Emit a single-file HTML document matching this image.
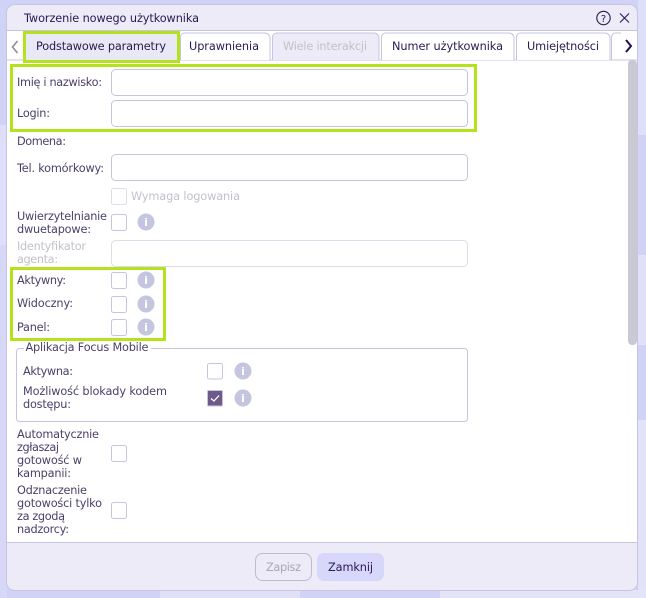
<!DOCTYPE html>
<html lang="pl"><head><meta charset="utf-8"><title>Tworzenie nowego użytkownika</title>
<style>
html,body{margin:0;padding:0;width:646px;height:598px;overflow:hidden;background:#d8d9f7}
svg{display:block}
text{font-family:"DejaVu Sans","Liberation Sans",sans-serif;font-size:11.3px;fill:#4c3f68}
.t{fill:#2a1a52}
.d{fill:#c3c0ca}
.g{fill:none;stroke:#b4e21c;stroke-width:3}
.i{fill:#fff;stroke:#c6c4e0;stroke-width:1}
.c{fill:#fff;stroke:#c6c4e0;stroke-width:1}
.tab{fill:#fff;stroke:#c6c4e0;stroke-width:1}
.n{fill:#c4c5df}
.nt{fill:#fff;font-size:11px;font-weight:bold;text-anchor:middle}
</style></head><body>
<svg width="646" height="598" viewBox="0 0 646 598" xmlns="http://www.w3.org/2000/svg">
<!-- background -->
<rect width="646" height="598" fill="#d1d3f6"/>
<rect x="0" y="125" width="7" height="120" fill="#dfdff9"/>
<rect x="0" y="245" width="7" height="353" fill="#d7d8f7"/>
<path d="M638 0H646V135H638Z" fill="#dedff9"/>
<path d="M638 255H646V345H638Z" fill="#e0e0f9"/>
<path d="M638 420H646V598H638Z" fill="#e2e2f9"/>
<rect x="160" y="590" width="140" height="8" fill="#e0e0f9"/>
<rect x="440" y="590" width="206" height="8" fill="#e4e4f9"/>
<!-- dialog -->
<rect x="6.500" y="4.500" width="631" height="586" rx="8" fill="#ecebf7" stroke="#c6c4e0"/>
<rect x="7" y="60" width="630" height="482" fill="#fff"/>
<rect x="7" y="31" width="630" height="29" fill="#fff"/>
<path d="M7 30.500H637M7 60H637M7 542.500H637" stroke="#c6c4e0" fill="none"/>
<text class="t" x="24" y="22" textLength="175" lengthAdjust="spacing">Tworzenie nowego użytkownika</text>
<!-- help / close -->
<circle cx="603.500" cy="18" r="6.700" fill="none" stroke="#2a1a52" stroke-width="1.100"/>
<text class="t" x="603.500" y="22" text-anchor="middle" style="font-size:10px">?</text>
<path d="M620 13.500L629 22.500M629 13.500L620 22.500" stroke="#2a1a52" stroke-width="1.100" fill="none"/>
<!-- tabs -->
<path d="M17.500 41L12.500 47L17.500 53" stroke="#8f8d99" stroke-width="1.600" fill="none"/>
<rect x="24.500" y="32.500" width="154" height="28" fill="#e9e8f5"/>
<path d="M180.500 60V37a4 4 0 0 1 4-4H265a5 5 0 0 1 5 5V60" class="tab"/>
<path d="M272.500 60V37a4 4 0 0 1 4-4H374a5 5 0 0 1 5 5V60" fill="#ecebf7" stroke="#c6c4e0"/>
<path d="M381.500 60V37a4 4 0 0 1 4-4H509a5 5 0 0 1 5 5V60" class="tab"/>
<path d="M516.500 60V37a4 4 0 0 1 4-4H605a5 5 0 0 1 5 5V60" class="tab"/>
<path d="M611.500 60V37a4 4 0 0 1 4-4H621" class="tab"/>
<rect x="621" y="33" width="16" height="26" fill="#fff"/>
<path d="M626 40L631 46L626 52" stroke="#1e1050" stroke-width="2" fill="none"/>
<text class="t" x="36" y="50" textLength="130" lengthAdjust="spacing">Podstawowe parametry</text>
<text class="t" x="189" y="50" textLength="70" lengthAdjust="spacing">Uprawnienia</text>
<text class="d" x="283" y="50" textLength="84" lengthAdjust="spacing">Wiele interakcji</text>
<text class="t" x="392" y="50" textLength="111" lengthAdjust="spacing">Numer użytkownika</text>
<text class="t" x="527" y="50" textLength="72" lengthAdjust="spacing">Umiejętności</text>
<rect class="g" x="24.500" y="32.500" width="154" height="29"/>
<!-- scrollbar -->
<rect x="628" y="60" width="9" height="285" rx="4" fill="#c9c9d4"/>
<!-- top fields -->
<rect class="g" x="11.500" y="65.500" width="464" height="65"/>
<rect class="i" x="111.500" y="69.500" width="356" height="26" rx="4"/>
<rect class="i" x="111.500" y="100.500" width="356" height="26" rx="4"/>
<text x="17" y="86" textLength="85" lengthAdjust="spacing">Imię i nazwisko:</text>
<text x="17" y="117" textLength="33" lengthAdjust="spacing">Login:</text>
<text x="17" y="145" textLength="49" lengthAdjust="spacing">Domena:</text>
<text x="17" y="172" textLength="87" lengthAdjust="spacing">Tel. komórkowy:</text>
<rect class="i" x="111.500" y="154.500" width="356" height="26" rx="4"/>
<rect x="111.500" y="188.500" width="15" height="16" rx="2" fill="#fff" stroke="#dddce9"/>
<text class="d" x="131" y="200" textLength="109" lengthAdjust="spacing">Wymaga logowania</text>
<text x="17" y="220" textLength="90" lengthAdjust="spacing">Uwierzytelnianie</text>
<text x="17" y="233" textLength="74" lengthAdjust="spacing">dwuetapowe:</text>
<rect class="c" x="111.500" y="214.500" width="15" height="16" rx="2"/>
<circle class="n" cx="146" cy="222" r="8.500"/><text class="nt" x="146" y="226">i</text>
<text class="d" x="17" y="250" textLength="69" lengthAdjust="spacing">Identyfikator</text>
<text class="d" x="17" y="263" textLength="41" lengthAdjust="spacing">agenta:</text>
<rect x="111.500" y="240.500" width="356" height="26" rx="4" fill="#fff" stroke="#dddce9"/>
<!-- active group -->
<rect class="g" x="11.500" y="268.500" width="153" height="71"/>
<text x="17" y="284" textLength="49" lengthAdjust="spacing">Aktywny:</text>
<rect class="c" x="111.500" y="272.500" width="15" height="16" rx="2"/>
<circle class="n" cx="146" cy="280" r="8.500"/><text class="nt" x="146" y="284">i</text>
<text x="17" y="307" textLength="56" lengthAdjust="spacing">Widoczny:</text>
<rect class="c" x="111.500" y="296.500" width="15" height="16" rx="2"/>
<circle class="n" cx="146" cy="304" r="8.500"/><text class="nt" x="146" y="308">i</text>
<text x="17" y="331" textLength="33" lengthAdjust="spacing">Panel:</text>
<rect class="c" x="111.500" y="319.500" width="15" height="16" rx="2"/>
<circle class="n" cx="146" cy="327" r="8.500"/><text class="nt" x="146" y="331">i</text>
<!-- fieldset -->
<rect x="16.500" y="348.500" width="451" height="73" rx="3" fill="#fff" stroke="#c6c4e0"/>
<rect x="24" y="344" width="127" height="8" fill="#fff"/>
<text x="25.500" y="351" textLength="123" lengthAdjust="spacing">Aplikacja Focus Mobile</text>
<text x="23" y="375" textLength="50" lengthAdjust="spacing">Aktywna:</text>
<rect class="c" x="207.500" y="363.500" width="15" height="15.500" rx="2"/>
<circle class="n" cx="243" cy="371" r="8.500"/><text class="nt" x="243" y="375">i</text>
<text x="23" y="395" textLength="144" lengthAdjust="spacing">Możliwość blokady kodem</text>
<text x="23" y="408" textLength="48" lengthAdjust="spacing">dostępu:</text>
<rect x="207.500" y="390.500" width="15" height="15.500" rx="1" fill="#6d5a88" stroke="#c6c4e0"/>
<path d="M211 398.500L214 401L219 395.500" stroke="#fff" stroke-width="1.300" fill="none"/>
<circle class="n" cx="243" cy="398" r="8.500"/><text class="nt" x="243" y="402">i</text>
<!-- lower -->
<text x="17" y="438" textLength="82" lengthAdjust="spacing">Automatycznie</text>
<text x="17" y="451" textLength="42" lengthAdjust="spacing">zgłaszaj</text>
<text x="17" y="464" textLength="65" lengthAdjust="spacing">gotowość w</text>
<text x="17" y="477" textLength="54" lengthAdjust="spacing">kampanii:</text>
<rect class="c" x="111.500" y="445.500" width="15" height="16" rx="2"/>
<text x="17" y="494" textLength="70" lengthAdjust="spacing">Odznaczenie</text>
<text x="17" y="507" textLength="85" lengthAdjust="spacing">gotowości tylko</text>
<text x="17" y="520" textLength="48" lengthAdjust="spacing">za zgodą</text>
<text x="17" y="533" textLength="52" lengthAdjust="spacing">nadzorcy:</text>
<rect class="c" x="111.500" y="502.500" width="15" height="16" rx="2"/>
<!-- footer -->
<rect x="255.500" y="553.500" width="56" height="27" rx="7" fill="#ecebf7" stroke="#bdbcc8"/>
<text x="266" y="571" textLength="35" lengthAdjust="spacing" style="fill:#a9a7b2">Zapisz</text>
<rect x="317" y="553" width="67" height="28" rx="7" fill="#d6d7fa"/>
<text class="t" x="328" y="571" textLength="45" lengthAdjust="spacing">Zamknij</text>
</svg>
</body></html>
